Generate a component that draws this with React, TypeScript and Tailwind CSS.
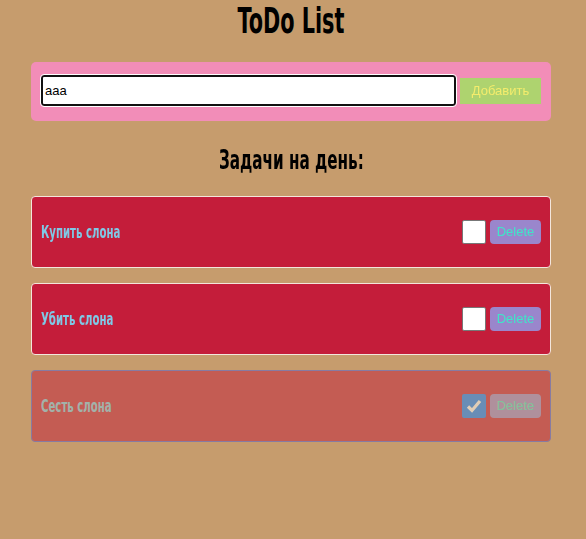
import React, { useState } from 'react';

interface Task {
  id: number;
  title: string;
  done: boolean;
}

const App: React.FC = () => {
  const [text, setText] = useState('aaa');
  const [tasks, setTasks] = useState<Task[]>([
    { id: 1, title: 'Купить слона', done: false },
    { id: 2, title: 'Убить слона', done: false },
    { id: 3, title: 'Сесть слона', done: true },
  ]);

  // Toggle the done flag of one task
  const toggle = (id: number) =>
    setTasks((prev) => prev.map((t) => (t.id === id ? { ...t, done: !t.done } : t)));

  const remove = (id: number) => setTasks((prev) => prev.filter((t) => t.id !== id));

  const add = (e: React.FormEvent) => {
    e.preventDefault();
    if (!text.trim()) return;
    setTasks((prev) => [...prev, { id: Date.now(), title: text, done: false }]);
    setText('');
  };

  return (
    <div className="min-h-[539px] w-full bg-[#c69c6d]">
      <div className="ml-[31px] w-[520px]">
        <h1 className="flex h-[40px] items-center justify-center pt-[2px]">
          <span className="inline-block scale-x-[0.66] font-['DejaVu_Sans'] text-[35px] leading-[38px] font-bold font-stretch-condensed text-black">
            ToDo List
          </span>
        </h1>

        {/* Form */}
        <form
          onSubmit={add}
          className="mt-[22px] flex items-center gap-[4px] rounded-[5px] bg-[#f28db8] pt-[13px] pr-[10px] pb-[15px] pl-[10px]"
        >
          <input
            autoFocus
            value={text}
            onChange={(e) => setText(e.target.value)}
            className="h-[31px] flex-1 rounded-[3px] border-2 border-[#111] bg-white px-[2px] font-['Liberation_Sans'] text-[13px] text-black outline outline-1 outline-white"
          />
          <button type="submit" className="h-[26px] w-[81px] bg-[#aed36f] font-['Liberation_Sans'] text-[13px] text-[#f4ec6c]">
            Добавить
          </button>
        </form>

        <h2 className="mt-[23px] flex h-[32px] items-center justify-center">
          <span className="inline-block scale-x-[0.65] font-['DejaVu_Sans'] text-[26px] leading-[32px] font-bold font-stretch-condensed text-black">
            Задачи на день:
          </span>
        </h2>

        {/* Task list */}
        <div className="mt-[20px] flex flex-col gap-[15px]">
          {tasks.map((t) => (
            <div
              key={t.id}
              className={
                t.done
                  ? 'flex items-center rounded-[4px] border border-[#4a5cd8] bg-[#c41d3a] py-[23px] pr-[9px] pl-[9px] opacity-50'
                  : 'flex items-center rounded-[4px] border border-[#f3e6dc] bg-[#c41d3a] py-[23px] pr-[9px] pl-[9px]'
              }
            >
              <span className="flex-1 leading-[24px]">
                <span className="inline-block origin-left scale-x-[0.665] font-['DejaVu_Sans'] text-[17px] leading-[24px] font-bold font-stretch-condensed text-[#7fc9e6]">
                  {t.title}
                </span>
              </span>
              <button
                type="button"
                onClick={() => toggle(t.id)}
                className={
                  t.done
                    ? 'flex h-[24px] w-[24px] items-center justify-center rounded-[2px] bg-[#0e80ff]'
                    : 'flex h-[24px] w-[24px] items-center justify-center rounded-[2px] border border-[#777] bg-white'
                }
              >
                {t.done && (
                  <svg width="18" height="18" viewBox="0 0 18 18">
                    <path d="M3 9.5 L7 13.5 L15 4" fill="none" stroke="#fff" strokeWidth="3.2" />
                  </svg>
                )}
              </button>
              <button
                type="button"
                onClick={() => remove(t.id)}
                className="ml-[4px] h-[24px] w-[51px] rounded-[4px] bg-[#9a86cc] font-['Liberation_Sans'] text-[13px] text-[#3fe6c8]"
              >
                Delete
              </button>
            </div>
          ))}
        </div>
      </div>
    </div>
  );
};

export default App;
